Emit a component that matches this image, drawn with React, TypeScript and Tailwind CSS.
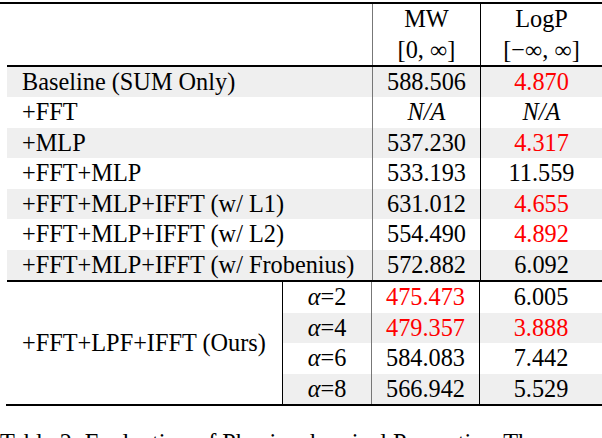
const rows = [
  { name: "Baseline (SUM Only)", mw: "588.506", logp: "4.870", mwRed: false, logpRed: true, gray: true },
  { name: "+FFT", mw: "N/A", logp: "N/A", mwRed: false, logpRed: false, gray: false, na: true },
  { name: "+MLP", mw: "537.230", logp: "4.317", mwRed: false, logpRed: true, gray: true },
  { name: "+FFT+MLP", mw: "533.193", logp: "11.559", mwRed: false, logpRed: false, gray: false },
  { name: "+FFT+MLP+IFFT (w/ L1)", mw: "631.012", logp: "4.655", mwRed: false, logpRed: true, gray: true },
  { name: "+FFT+MLP+IFFT (w/ L2)", mw: "554.490", logp: "4.892", mwRed: false, logpRed: true, gray: false },
  { name: "+FFT+MLP+IFFT (w/ Frobenius)", mw: "572.882", logp: "6.092", mwRed: false, logpRed: false, gray: true },
];

const ours = [
  { a: "2", mw: "475.473", logp: "6.005", mwRed: true, logpRed: false, gray: false },
  { a: "4", mw: "479.357", logp: "3.888", mwRed: true, logpRed: true, gray: true },
  { a: "6", mw: "584.083", logp: "7.442", mwRed: false, logpRed: false, gray: false },
  { a: "8", mw: "566.942", logp: "5.529", mwRed: false, logpRed: false, gray: true },
];

export default function App() {
  return (
    <div
      className="w-[602px] h-[438px] overflow-hidden bg-white text-black text-[24.3px] leading-[30.5px]"
      style={{ fontFamily: '"Liberation Serif", "Times New Roman", serif' }}
    >
      <div className="h-[2px]" />
      {/* top rule */}
      <div className="h-[2px] bg-black" />

      <div className="ml-[7px]">
        {/* header */}
        <div className="flex h-[61px]">
          <div className="w-[365px]" />
          <div className="w-[108px] border-l border-[#777] flex flex-col items-center">
            <span>MW</span>
            <span>[0, ∞]</span>
          </div>
          <div className="flex-1 border-l border-black flex flex-col items-center">
            <span>LogP</span>
            <span>[−∞, ∞]</span>
          </div>
        </div>
        <div className="h-[1.5px] bg-black" />

        {/* ablation rows */}
        {rows.map((r) => (
          <div key={r.name} className={`flex h-[30.5px] ${r.gray ? "bg-[#efefef]" : "bg-white"}`}>
            <div className="w-[365px] pl-[15px] whitespace-nowrap">{r.name}</div>
            <div
              className={`w-[108px] border-l border-[#777] text-center ${r.na ? "italic" : ""} ${
                r.mwRed ? "text-[#ff0000]" : ""
              }`}
            >
              {r.mw}
            </div>
            <div
              className={`flex-1 border-l border-black text-center ${r.na ? "italic" : ""} ${
                r.logpRed ? "text-[#ff0000]" : ""
              }`}
            >
              {r.logp}
            </div>
          </div>
        ))}
        <div className="h-[2px] bg-black" />

        {/* ours */}
        <div className="flex">
          <div className="w-[276px] border-r border-black flex items-center pl-[15px] whitespace-nowrap">
            +FFT+LPF+IFFT (Ours)
          </div>
          <div className="flex-1 flex flex-col">
            {ours.map((r) => (
              <div key={r.a} className={`flex h-[30.5px] ${r.gray ? "bg-[#efefef]" : "bg-white"}`}>
                <div className="w-[88px] text-center">
                  <span className="italic">α</span>=<span>{r.a}</span>
                </div>
                <div className={`w-[108px] border-l border-[#777] text-center ${r.mwRed ? "text-[#ff0000]" : ""}`}>
                  {r.mw}
                </div>
                <div className={`flex-1 border-l border-black text-center ${r.logpRed ? "text-[#ff0000]" : ""}`}>
                  {r.logp}
                </div>
              </div>
            ))}
          </div>
        </div>
      </div>
      <div className="h-[2px] bg-black ml-[6px]" />

      {/* caption, cut off by the frame */}
      <div className="mt-[22px] whitespace-nowrap">
        Table 2: Evaluation of Physicochemical Properties. The
      </div>
    </div>
  );
}
